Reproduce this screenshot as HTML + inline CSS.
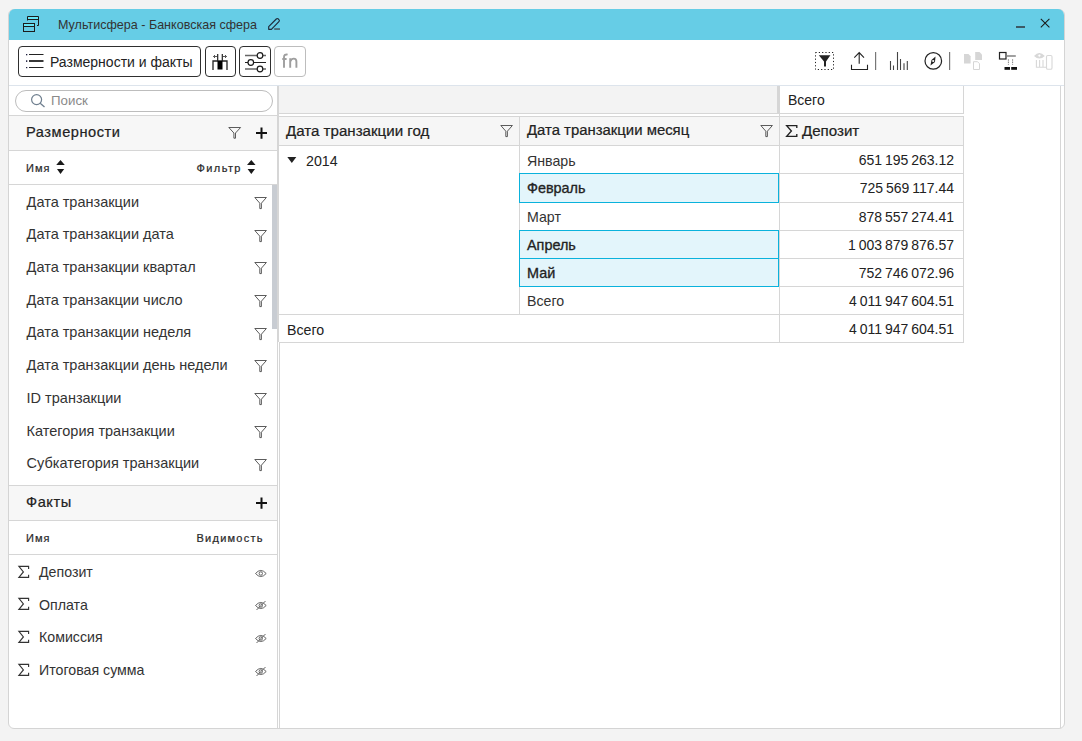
<!DOCTYPE html>
<html><head><meta charset="utf-8">
<style>
*{box-sizing:border-box;margin:0;padding:0}
html,body{width:1082px;height:741px;overflow:hidden;background:#f3f3f3;font-family:"Liberation Sans",sans-serif;color:#333}
body{position:relative}
.a{position:absolute}
.t{position:absolute;white-space:nowrap;line-height:1}
.b{font-weight:bold}
.sb{-webkit-text-stroke:0.32px currentColor}
.sb3{-webkit-text-stroke:0.22px currentColor}
.sb2{-webkit-text-stroke:0.22px currentColor}
.hl{position:absolute;height:1px;background:#d6d6d6}
.vl{position:absolute;width:1px;background:#d6d6d6}
.btn{position:absolute;top:46px;height:31px;border:1px solid #2f2f2f;border-radius:4px;background:#fff}
svg{position:absolute;overflow:visible}
</style></head>
<body>
<!-- window frame -->
<div class="a" style="left:8px;top:9px;width:1057px;height:720px;background:#fff;border:1px solid #d4d4d4;border-radius:6px"></div>
<!-- title bar -->
<div class="a" style="left:9px;top:9px;width:1055px;height:31px;background:#66cde6;border-radius:6px 6px 0 0"></div>
<svg style="left:20px;top:14px" width="22" height="20" viewBox="0 0 22 20">
  <rect x="7.5" y="2.5" width="11" height="3" fill="#66e6f8"/>
  <rect x="3.5" y="9.5" width="11" height="3" fill="#66e6f8"/>
  <path d="M7.5 6.5 V2.5 H18.5 V11.5 H17" fill="none" stroke="#1c1c1c" stroke-width="1"/>
  <path d="M7.5 5.5 H18.5" stroke="#1c1c1c" stroke-width="1"/>
  <rect x="3.5" y="9.5" width="11" height="8" fill="none" stroke="#1c1c1c" stroke-width="1"/>
  <path d="M3.5 12.5 H14.5" stroke="#1c1c1c" stroke-width="1"/>
</svg>
<div class="t" style="left:58px;top:19px;font-size:12.55px;color:#333">Мультисфера - Банковская сфера</div>
<!-- pencil -->
<svg style="left:262px;top:14px" width="24" height="20" viewBox="0 0 24 20">
  <path d="M6.7 15.3 V12.6 L14.3 5 Q15.3 4 16.3 5 L16.9 5.6 Q17.9 6.6 16.9 7.6 L9.4 15.3 Z" fill="none" stroke="#1e2a3a" stroke-width="1.15" stroke-linejoin="round"/>
  <rect x="12.2" y="14.2" width="5.8" height="1.7" fill="#48656f"/>
</svg>
<!-- minimize / close -->
<div class="a" style="left:1016px;top:26px;width:9px;height:2px;background:#3c5a66"></div>
<svg style="left:1040px;top:18px" width="11" height="11" viewBox="0 0 11 11">
  <path d="M0.8 0.8 L9.4 9.4 M9.4 0.8 L0.8 9.4" stroke="#1a1a1a" stroke-width="1.05"/>
</svg>

<!-- toolbar -->
<div class="a" style="left:9px;top:85px;width:1055px;height:1px;background:#dde4ec"></div>
<div class="btn" style="left:18px;width:183px"></div>
<svg style="left:18px;top:46px" width="40" height="31" viewBox="0 0 40 31">
  <rect x="8" y="8" width="1.3" height="1.3" fill="#1f1f3f"/>
  <rect x="8" y="14.3" width="1.3" height="1.6" fill="#1f1f3f"/>
  <rect x="8" y="21" width="1.3" height="1.2" fill="#1f1f3f"/>
  <path d="M11 8.5 H25.5 M11 21.5 H25.5" stroke="#222" stroke-width="1.2"/>
  <path d="M11 15 H25.5" stroke="#222" stroke-width="1.8"/>
</svg>
<div class="t" style="left:50px;top:55px;font-size:14px;color:#222">Размерности и факты</div>

<div class="btn" style="left:205px;width:31px"></div>
<svg style="left:205px;top:46px" width="31" height="31" viewBox="0 0 31 31">
  <path d="M8 24 V15 H22 V24" fill="none" stroke="#222" stroke-width="1.3"/>
  <rect x="12.5" y="15" width="5" height="8.5" fill="#000"/>
  <path d="M12.7 8 V15 M17.3 8 V15" stroke="#222" stroke-width="1.2"/>
  <path d="M8.5 10.5 H12 M18 10.5 H21.5 M10 9 L8.5 10.5 L10 12 M20 9 L21.5 10.5 L20 12" fill="none" stroke="#444" stroke-width="0.9"/>
</svg>

<div class="btn" style="left:239px;width:32px"></div>
<svg style="left:239px;top:46px" width="32" height="31" viewBox="0 0 32 31">
  <path d="M6 9.5 H27 M6 23 H27" stroke="#666" stroke-width="1.6"/>
  <path d="M6 16.5 H27" stroke="#222" stroke-width="1"/>
  <circle cx="21" cy="9.5" r="2.8" fill="#fff" stroke="#1a1a1a" stroke-width="1.2"/>
  <circle cx="11.8" cy="16.5" r="2.8" fill="#fff" stroke="#1a1a1a" stroke-width="1.2"/>
  <circle cx="21" cy="23" r="2.8" fill="#fff" stroke="#1a1a1a" stroke-width="1.2"/>
</svg>

<div class="btn" style="left:274px;width:32px;border-color:#bdbdbd"></div>
<svg style="left:274px;top:46px" width="32" height="31" viewBox="0 0 32 31"><path d="M13.6 8.6 Q12.2 8.2 11 8.9 Q10 9.6 10 11.2 V21.8 M8.3 13 H12.6" fill="none" stroke="#9e9e9e" stroke-width="1.9"/><path d="M16.2 12.3 V21.8 M16.2 15.5 Q17.5 12.6 19.8 12.6 Q22.4 12.6 22.4 15.6 V21.8" fill="none" stroke="#9e9e9e" stroke-width="1.9"/></svg>

<!-- right toolbar icons -->
<svg style="left:810px;top:48px" width="30" height="26" viewBox="0 0 30 26">
  <rect x="5.5" y="4.5" width="18" height="17" fill="none" stroke="#222" stroke-width="1" stroke-dasharray="1.2 2.1"/>
  <path d="M8.8 7.2 H20.4 L16 13.5 V18.6 H14 V13.5 Z" fill="#222"/>
</svg>
<svg style="left:845px;top:48px" width="35" height="26" viewBox="0 0 35 26">
  <path d="M14.2 15.8 V4.8 M9.3 9.6 L14.2 4.6 L19 9.6" fill="none" stroke="#222" stroke-width="1.1"/>
  <path d="M6.5 16.8 V21.5 H22.5 V16.8" fill="none" stroke="#222" stroke-width="1.1"/>
  <rect x="30" y="4" width="1.2" height="18" fill="#777"/>
</svg>
<svg style="left:884px;top:48px" width="30" height="26" viewBox="0 0 30 26">
  <path d="M6.5 22 V13 M9.5 22 V17.5 M13.5 22 V4 M16.5 22 V11 M20 22 V15.3 M23.3 22 V13" stroke="#444" stroke-width="1.1"/>
</svg>
<svg style="left:920px;top:48px" width="35" height="26" viewBox="0 0 35 26">
  <circle cx="13.3" cy="12.9" r="8.3" fill="none" stroke="#222" stroke-width="1.2"/>
  <path d="M10.5 17.5 L11.5 12 L15.5 8.5 L15 14 Z" fill="#222"/>
  <circle cx="13.2" cy="13" r="1.1" fill="#fff"/>
  <rect x="29" y="4" width="1.2" height="18" fill="#777"/>
</svg>
<svg style="left:958px;top:48px" width="30" height="26" viewBox="0 0 30 26">
  <path d="M6 6 H10.5 L12.6 8.2 V15.5 H6 Z" fill="#d6d6d6"/>
  <path d="M17.2 4 H21.5 L24 6.5 V12 H17.2 Z" fill="#d6d6d6"/>
  <path d="M15.5 13.7 H19.5 L21.5 15.7 V21.5 H15.5 Z" fill="none" stroke="#d6d6d6" stroke-width="1"/>
</svg>
<svg style="left:994px;top:48px" width="30" height="26" viewBox="0 0 30 26">
  <rect x="5.5" y="4.5" width="6.5" height="6.5" fill="none" stroke="#222" stroke-width="1.2"/>
  <path d="M12.5 8 H21.8" stroke="#888" stroke-width="1.6"/>
  <path d="M14.4 11.5 V16.5 M18.6 11.5 V16.5" stroke="#333" stroke-width="0.9" stroke-dasharray="1 1.2"/>
  <rect x="10.5" y="19" width="5.5" height="2.8" fill="#111"/>
  <rect x="17.2" y="19" width="5.8" height="2.8" fill="#111"/>
</svg>
<svg style="left:1028px;top:48px" width="30" height="26" viewBox="0 0 30 26">
  <path d="M6 8 Q11.4 2 16.8 8 Q11.4 13 6 8 Z" fill="#d8d8d8"/>
  <circle cx="11.4" cy="7.6" r="1.6" fill="#fff" stroke="#d8d8d8"/>
  <path d="M8.4 12 V19.3 H18 M11.6 12 V19 M15 12 V19" fill="none" stroke="#d8d8d8" stroke-width="1.1"/>
  <rect x="18.5" y="7.5" width="5.5" height="13.8" rx="1.3" fill="none" stroke="#d8d8d8" stroke-width="1.1"/>
</svg>

<!-- left panel divider -->
<div class="a" style="left:277px;top:86px;width:1px;height:642px;background:#d6d6d6"></div>
<div class="a" style="left:278px;top:86px;width:1px;height:256px;background:#d6d6d6"></div>

<!-- search -->
<div class="a" style="left:15px;top:90px;width:258px;height:22px;border:1px solid #bdbdbd;border-radius:11px;background:#fff"></div>
<svg style="left:30px;top:93px" width="16" height="15" viewBox="0 0 16 15">
  <circle cx="6.6" cy="6.6" r="5" fill="none" stroke="#6f7f8f" stroke-width="1.2"/>
  <path d="M10.2 10.2 L14.5 14" stroke="#6f7f8f" stroke-width="1.3"/>
</svg>
<div class="t" style="left:51px;top:94px;font-size:13.3px;color:#8a8a8a">Поиск</div>

<!-- dimensions header -->
<div class="a" style="left:9px;top:115px;width:268px;height:36px;background:#f7f7f7;border-top:1px solid #d6d6d6;border-bottom:1px solid #d6d6d6"></div>
<div class="t sb3" style="left:26px;top:124.6px;font-size:14.6px;letter-spacing:0.55px;color:#222">Размерности</div>
<svg style="left:228px;top:126px" width="14" height="14" viewBox="0 0 14 14">
  <path d="M0.8 1.5 H12.6 L7.5 7 V12.2 H5.9 V7 Z" fill="none" stroke="#4a4a4a" stroke-width="0.9" stroke-linejoin="round"/>
</svg>
<svg style="left:255px;top:127px" width="13" height="13" viewBox="0 0 13 13">
  <path d="M1 5.9 H12 M6.5 0.6 V11.7" stroke="#111" stroke-width="2"/>
</svg>
<!-- column header -->
<div class="a" style="left:9px;top:184px;width:268px;height:1px;background:#d6d6d6"></div>
<div class="t sb2" style="left:26px;top:162.6px;font-size:11px;letter-spacing:1px;color:#2a2a2a">Имя</div>
<svg style="left:56px;top:159px" width="10" height="16" viewBox="0 0 10 16">
  <path d="M0.2 6 L4.5 1 L8.8 6 Z M1 10 L4.5 15 L8.2 10 Z" fill="#1a1a1a"/>
</svg>
<div class="t sb2" style="left:196.5px;top:162.6px;font-size:11px;letter-spacing:1.4px;color:#2a2a2a">Фильтр</div>
<svg style="left:247px;top:159px" width="10" height="16" viewBox="0 0 10 16">
  <path d="M0 6 L4.3 1 L8.6 6 Z M0.6 10 L4.3 15 L8 10 Z" fill="#1a1a1a"/>
</svg>
<!-- scrollbar -->
<div class="a" style="left:272px;top:185px;width:5px;height:144px;background:#c8ccd2"></div>

<div id="dimlist"><div class="t" style="left:26.6px;top:194.6px;font-size:14.5px;color:#333">Дата транзакции</div>
<svg style="left:254px;top:197px" width="14" height="13" viewBox="0 0 14 13"><path d="M0.8 0.5 H12.4 L7.4 6.2 V11.6 H5.8 V6.2 Z" fill="none" stroke="#4a4a4a" stroke-width="0.9" stroke-linejoin="round"/></svg>
<div class="t" style="left:26.6px;top:227.3px;font-size:14.5px;color:#333">Дата транзакции дата</div>
<svg style="left:254px;top:230px" width="14" height="13" viewBox="0 0 14 13"><path d="M0.8 0.5 H12.4 L7.4 6.2 V11.6 H5.8 V6.2 Z" fill="none" stroke="#4a4a4a" stroke-width="0.9" stroke-linejoin="round"/></svg>
<div class="t" style="left:26.6px;top:259.9px;font-size:14.5px;color:#333">Дата транзакции квартал</div>
<svg style="left:254px;top:262px" width="14" height="13" viewBox="0 0 14 13"><path d="M0.8 0.5 H12.4 L7.4 6.2 V11.6 H5.8 V6.2 Z" fill="none" stroke="#4a4a4a" stroke-width="0.9" stroke-linejoin="round"/></svg>
<div class="t" style="left:26.6px;top:292.6px;font-size:14.5px;color:#333">Дата транзакции число</div>
<svg style="left:254px;top:295px" width="14" height="13" viewBox="0 0 14 13"><path d="M0.8 0.5 H12.4 L7.4 6.2 V11.6 H5.8 V6.2 Z" fill="none" stroke="#4a4a4a" stroke-width="0.9" stroke-linejoin="round"/></svg>
<div class="t" style="left:26.6px;top:325.4px;font-size:14.5px;color:#333">Дата транзакции неделя</div>
<svg style="left:254px;top:328px" width="14" height="13" viewBox="0 0 14 13"><path d="M0.8 0.5 H12.4 L7.4 6.2 V11.6 H5.8 V6.2 Z" fill="none" stroke="#4a4a4a" stroke-width="0.9" stroke-linejoin="round"/></svg>
<div class="t" style="left:26.6px;top:358.0px;font-size:14.5px;color:#333">Дата транзакции день недели</div>
<svg style="left:254px;top:360px" width="14" height="13" viewBox="0 0 14 13"><path d="M0.8 0.5 H12.4 L7.4 6.2 V11.6 H5.8 V6.2 Z" fill="none" stroke="#4a4a4a" stroke-width="0.9" stroke-linejoin="round"/></svg>
<div class="t" style="left:26.6px;top:390.8px;font-size:14.5px;color:#333">ID транзакции</div>
<svg style="left:254px;top:393px" width="14" height="13" viewBox="0 0 14 13"><path d="M0.8 0.5 H12.4 L7.4 6.2 V11.6 H5.8 V6.2 Z" fill="none" stroke="#4a4a4a" stroke-width="0.9" stroke-linejoin="round"/></svg>
<div class="t" style="left:26.6px;top:423.5px;font-size:14.5px;color:#333">Категория транзакции</div>
<svg style="left:254px;top:426px" width="14" height="13" viewBox="0 0 14 13"><path d="M0.8 0.5 H12.4 L7.4 6.2 V11.6 H5.8 V6.2 Z" fill="none" stroke="#4a4a4a" stroke-width="0.9" stroke-linejoin="round"/></svg>
<div class="t" style="left:26.6px;top:456.1px;font-size:14.5px;color:#333">Субкатегория транзакции</div>
<svg style="left:254px;top:459px" width="14" height="13" viewBox="0 0 14 13"><path d="M0.8 0.5 H12.4 L7.4 6.2 V11.6 H5.8 V6.2 Z" fill="none" stroke="#4a4a4a" stroke-width="0.9" stroke-linejoin="round"/></svg></div><!--end-->

<!-- facts -->
<div class="a" style="left:9px;top:485px;width:268px;height:36px;background:#f7f7f7;border-top:1px solid #d6d6d6;border-bottom:1px solid #d6d6d6"></div>
<div class="t sb3" style="left:26px;top:494.6px;font-size:14.6px;letter-spacing:0.55px;color:#222">Факты</div>
<svg style="left:255px;top:497px" width="13" height="13" viewBox="0 0 13 13">
  <path d="M1 5.9 H12 M6.5 0.6 V11.7" stroke="#111" stroke-width="2"/>
</svg>
<div class="a" style="left:9px;top:554px;width:268px;height:1px;background:#d6d6d6"></div>
<div class="t sb2" style="left:26px;top:532.6px;font-size:11px;letter-spacing:1px;color:#2a2a2a">Имя</div>
<div class="t sb2" style="left:196.5px;top:532.6px;font-size:11px;letter-spacing:1.25px;color:#2a2a2a">Видимость</div>

<div id="factlist"><svg style="left:17px;top:564.5px" width="14" height="14" viewBox="0 0 14 14"><path d="M11.6 4 V1.3 H1.9 L6.4 6.9 L1.9 12.4 H11.6 V9.7" fill="none" stroke="#333" stroke-width="1.15"/></svg>
<div class="t" style="left:39px;top:564.9px;font-size:14.2px;color:#333">Депозит</div>
<svg style="left:255px;top:569.8px" width="12" height="7" viewBox="0 0 12 7"><path d="M0.5 3.5 Q5.8 -2.6 11.2 3.5 Q5.8 9.6 0.5 3.5 Z" fill="none" stroke="#555" stroke-width="0.9"/><circle cx="5.8" cy="3.5" r="1.7" fill="none" stroke="#555" stroke-width="0.9"/></svg>
<svg style="left:17px;top:597.1px" width="14" height="14" viewBox="0 0 14 14"><path d="M11.6 4 V1.3 H1.9 L6.4 6.9 L1.9 12.4 H11.6 V9.7" fill="none" stroke="#333" stroke-width="1.15"/></svg>
<div class="t" style="left:39px;top:597.6px;font-size:14.2px;color:#333">Оплата</div>
<svg style="left:255px;top:600.4px" width="12" height="11" viewBox="0 0 12 11"><path d="M0.5 5.5 Q5.8 -0.6 11.2 5.5 Q5.8 11.6 0.5 5.5 Z" fill="none" stroke="#555" stroke-width="0.9"/><circle cx="5.8" cy="5.5" r="1.7" fill="none" stroke="#555" stroke-width="0.9"/><path d="M1.5 10 L10.5 1" stroke="#555" stroke-width="0.9"/></svg>
<svg style="left:17px;top:629.8px" width="14" height="14" viewBox="0 0 14 14"><path d="M11.6 4 V1.3 H1.9 L6.4 6.9 L1.9 12.4 H11.6 V9.7" fill="none" stroke="#333" stroke-width="1.15"/></svg>
<div class="t" style="left:39px;top:630.2px;font-size:14.2px;color:#333">Комиссия</div>
<svg style="left:255px;top:633.1px" width="12" height="11" viewBox="0 0 12 11"><path d="M0.5 5.5 Q5.8 -0.6 11.2 5.5 Q5.8 11.6 0.5 5.5 Z" fill="none" stroke="#555" stroke-width="0.9"/><circle cx="5.8" cy="5.5" r="1.7" fill="none" stroke="#555" stroke-width="0.9"/><path d="M1.5 10 L10.5 1" stroke="#555" stroke-width="0.9"/></svg>
<svg style="left:17px;top:662.5px" width="14" height="14" viewBox="0 0 14 14"><path d="M11.6 4 V1.3 H1.9 L6.4 6.9 L1.9 12.4 H11.6 V9.7" fill="none" stroke="#333" stroke-width="1.15"/></svg>
<div class="t" style="left:39px;top:662.9px;font-size:14.2px;color:#333">Итоговая сумма</div>
<svg style="left:255px;top:665.8px" width="12" height="11" viewBox="0 0 12 11"><path d="M0.5 5.5 Q5.8 -0.6 11.2 5.5 Q5.8 11.6 0.5 5.5 Z" fill="none" stroke="#555" stroke-width="0.9"/><circle cx="5.8" cy="5.5" r="1.7" fill="none" stroke="#555" stroke-width="0.9"/><path d="M1.5 10 L10.5 1" stroke="#555" stroke-width="0.9"/></svg></div><!--end-->

<!-- table -->
<div id="table"><div class="a" style="left:279px;top:86px;width:498px;height:27px;background:#f3f3f3"></div>
<div class="a" style="left:777px;top:86px;width:2px;height:28px;background:#d6d6d6"></div>
<div class="a" style="left:279px;top:113px;width:500px;height:1px;background:#d6d6d6"></div>
<div class="a" style="left:780px;top:113px;width:184px;height:1px;background:#d6d6d6"></div>
<div class="a" style="left:779px;top:86px;width:1px;height:30px;background:#d6d6d6"></div>
<div class="a" style="left:963px;top:86px;width:1px;height:28px;background:#d6d6d6"></div>
<div class="t" style="left:788px;top:93.0px;font-size:14px;color:#222">Всего</div>
<div class="a" style="left:279px;top:116px;width:684px;height:29px;background:#f6f6f6"></div>
<div class="a" style="left:279px;top:116px;width:685px;height:1px;background:#d6d6d6"></div>
<div class="a" style="left:279px;top:145px;width:685px;height:1px;background:#d6d6d6"></div>
<div class="a" style="left:519px;top:116px;width:1px;height:198px;background:#d6d6d6"></div>
<div class="a" style="left:779px;top:116px;width:1px;height:227px;background:#d6d6d6"></div>
<div class="a" style="left:963px;top:116px;width:1px;height:227px;background:#d6d6d6"></div>
<div class="t sb3" style="left:286px;top:123.1px;font-size:15.1px;color:#222">Дата транзакции год</div>
<div class="t sb3" style="left:527px;top:123.3px;font-size:14.9px;color:#222">Дата транзакции месяц</div>
<svg style="left:785px;top:124px" width="14" height="14" viewBox="0 0 14 14"><path d="M11.8 4 V1.6 H1.7 L6.4 7 L1.7 12.3 H11.8 V9.9" fill="none" stroke="#222" stroke-width="1.35"/></svg>
<div class="t sb3" style="left:802px;top:123.1px;font-size:15.1px;color:#222">Депозит</div>
<svg style="left:500px;top:125px" width="14" height="13" viewBox="0 0 14 13"><path d="M0.8 0.5 H12.4 L7.4 6.2 V11.6 H5.8 V6.2 Z" fill="none" stroke="#4a4a4a" stroke-width="0.9" stroke-linejoin="round"/></svg>
<svg style="left:760px;top:125px" width="14" height="13" viewBox="0 0 14 13"><path d="M0.8 0.5 H12.4 L7.4 6.2 V11.6 H5.8 V6.2 Z" fill="none" stroke="#4a4a4a" stroke-width="0.9" stroke-linejoin="round"/></svg>
<div class="t" style="left:527px;top:154.4px;font-size:14.2px;color:#333;z-index:3">Январь</div>
<div class="t" style="right:128px;top:153.3px;font-size:14px;color:#222;word-spacing:-1px">651 195 263.12</div>
<div class="a" style="left:519px;top:173px;width:260px;height:30px;background:#e3f5fb;border:1px solid #0ab2dc;z-index:2"></div>
<div class="t sb" style="left:527px;top:181.1px;font-size:14.4px;color:#222;z-index:3">Февраль</div>
<div class="t" style="right:128px;top:181.3px;font-size:14px;color:#222;word-spacing:-1px">725 569 117.44</div>
<div class="t" style="left:527px;top:209.6px;font-size:14.2px;color:#333;z-index:3">Март</div>
<div class="t" style="right:128px;top:209.8px;font-size:14px;color:#222;word-spacing:-1px">878 557 274.41</div>
<div class="a" style="left:519px;top:230px;width:260px;height:29px;background:#e3f5fb;border:1px solid #0ab2dc;z-index:2"></div>
<div class="t sb" style="left:527px;top:237.6px;font-size:14.4px;color:#222;z-index:3">Апрель</div>
<div class="t" style="right:128px;top:237.8px;font-size:14px;color:#222;word-spacing:-1px">1 003 879 876.57</div>
<div class="a" style="left:519px;top:258px;width:260px;height:29px;background:#e3f5fb;border:1px solid #0ab2dc;z-index:2"></div>
<div class="t sb" style="left:527px;top:265.8px;font-size:14.4px;color:#222;z-index:3">Май</div>
<div class="t" style="right:128px;top:265.8px;font-size:14px;color:#222;word-spacing:-1px">752 746 072.96</div>
<div class="t" style="left:527px;top:293.6px;font-size:14.2px;color:#333;z-index:3">Всего</div>
<div class="t" style="right:128px;top:293.8px;font-size:14px;color:#222;word-spacing:-1px">4 011 947 604.51</div>
<div class="a" style="left:519px;top:173px;width:445px;height:1px;background:#d6d6d6"></div>
<div class="a" style="left:519px;top:202px;width:445px;height:1px;background:#d6d6d6"></div>
<div class="a" style="left:519px;top:230px;width:445px;height:1px;background:#d6d6d6"></div>
<div class="a" style="left:519px;top:258px;width:445px;height:1px;background:#d6d6d6"></div>
<div class="a" style="left:519px;top:286px;width:445px;height:1px;background:#d6d6d6"></div>
<div class="a" style="left:519px;top:314px;width:445px;height:1px;background:#d6d6d6"></div>
<div class="a" style="left:279px;top:314px;width:685px;height:1px;background:#d6d6d6"></div>
<div class="a" style="left:279px;top:342px;width:685px;height:1px;background:#d6d6d6"></div>
<svg style="left:287px;top:156px" width="10" height="8" viewBox="0 0 10 8"><path d="M0.3 1 H9.3 L4.8 7 Z" fill="#222"/></svg>
<div class="t" style="left:306px;top:154.4px;font-size:14.2px;color:#222">2014</div>
<div class="t" style="left:287px;top:322.5px;font-size:14.2px;color:#222">Всего</div>
<div class="t" style="right:128px;top:321.9px;font-size:14px;color:#222;word-spacing:-1px">4 011 947 604.51</div>
<div class="a" style="left:279px;top:342px;width:1px;height:386px;background:#d6d6d6"></div>
<div class="a" style="left:1060px;top:86px;width:1px;height:642px;background:#d6d6d6"></div></div><!--end-->

</body></html>
